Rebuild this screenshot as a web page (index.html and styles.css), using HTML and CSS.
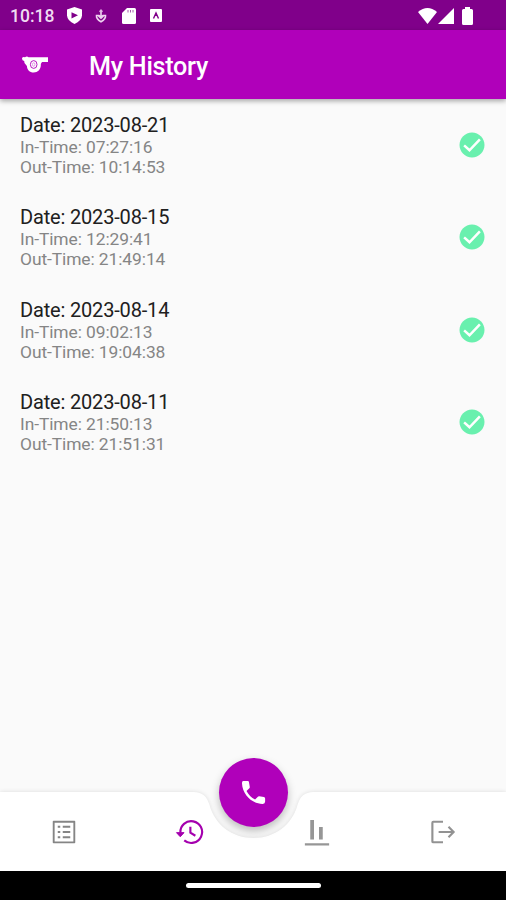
FILE: index.html
```html
<!DOCTYPE html>
<html lang="en">
<head>
<meta charset="utf-8">
<title>My History</title>
<link rel="stylesheet" href="styles.css">
</head>
<body>
<svg class="defs" aria-hidden="true">
  <symbol id="check" viewBox="0 0 24 24"><path d="M12 2C6.480 2 2 6.480 2 12s4.480 10 10 10 10-4.480 10-10S17.520 2 12 2z"/><path d="M5.700 12.300L10 16.200L18.300 7.500" fill="none" stroke="#fff" stroke-width="2"/></symbol>
</svg>
<div class="screen">
  <div class="status">
    <span class="clock">10:18</span>
    <svg class="s-shield" viewBox="0 0 15 17"><path fill="#fff" d="M7.500 0L15 2.500V8.500Q14.500 14 7.500 17Q.5 14 0 8.500V2.500z"/><path fill="#80008a" d="M4.500 5.200L11 8.300L4.500 11.400z"/></svg>
    <svg class="s-person" viewBox="0 0 12 14"><path d="M6 0L8 2.200L6 4.500L4 2.200z" fill="#e0b8e4"/><path d="M6 3.500V7M1.500 6.500H4L6 8L8 6.500H10.500C10.800 9 9 11 6 12.800C3 11 1.200 9 1.500 6.500z" fill="none" stroke="#edd3ef" stroke-width="1.600"/><path d="M3.500 7L6 9.300L8.500 7" fill="none" stroke="#edd3ef" stroke-width="1.500"/></svg>
    <svg class="s-card" viewBox="0 0 14 16"><path fill="#fff" d="M5 0H12.500Q14 0 14 1.500V14.500Q14 16 12.500 16H1.500Q0 16 0 14.500V5z"/><path d="M6 2v2.500M8.500 2v2.500M11 2v2.500" stroke="#a75aad"/></svg>
    <svg class="s-app" viewBox="0 0 12 13"><rect width="12" height="13" rx="1" fill="#fff"/><path d="M3.500 9.500L6 4L8.500 9.500M6 4V7" fill="none" stroke="#80008a" stroke-width="1.400"/></svg>
    <span class="spacer"></span>
    <svg class="s-wifi" viewBox="0 0 19 16"><path fill="#fff" d="M0 4Q9.500-4 19 4L9.500 16z"/></svg>
    <svg class="s-signal" viewBox="0 0 16 16"><path fill="#fff" d="M16 0V16H0z"/></svg>
    <svg class="s-battery" viewBox="0 0 11 18"><path fill="#fff" d="M3 0H8V2H9.500Q11 2 11 3.500V16.500Q11 18 9.500 18H1.500Q0 18 0 16.500V3.500Q0 2 1.500 2H3z"/></svg>
  </div>
  <header class="appbar">
    <svg class="whistle" viewBox="0 0 26 17"><path fill="#fff" d="M0 2.500Q0 1 1.500 1L3 1.300Q5 -.3 6.500 1.300H26V6H20L18.800 8C19.300 13 16 16.500 11.700 16.500C7.500 16.500 5.200 14 4.900 10L2.500 7L2.200 5Q0 4.500 0 2.500z"/><ellipse cx="11.700" cy="8.500" rx="3.300" ry="3.900" fill="none" stroke="#b000ba" stroke-width=".9"/><ellipse cx="11.700" cy="8.500" rx="1.200" ry="1.800" fill="none" stroke="#d477da" stroke-width=".7"/></svg>
    <h1>My History</h1>
  </header>
  <main class="list">
    <div class="row"><div><p class="date">Date: 2023-08-21</p><p class="time">In-Time: 07:27:16</p><p class="time">Out-Time: 10:14:53</p></div><svg class="check"><use href="#check"/></svg></div>
    <div class="row"><div><p class="date">Date: 2023-08-15</p><p class="time">In-Time: 12:29:41</p><p class="time">Out-Time: 21:49:14</p></div><svg class="check"><use href="#check"/></svg></div>
    <div class="row"><div><p class="date">Date: 2023-08-14</p><p class="time">In-Time: 09:02:13</p><p class="time">Out-Time: 19:04:38</p></div><svg class="check"><use href="#check"/></svg></div>
    <div class="row"><div><p class="date">Date: 2023-08-11</p><p class="time">In-Time: 21:50:13</p><p class="time">Out-Time: 21:51:31</p></div><svg class="check"><use href="#check"/></svg></div>
  </main>
  <footer class="nav">
    <svg class="notch" viewBox="0 0 506 79"><path fill="#fff" d="M0 0H193C203 0 207 5 209.500 13C215 33 232 46 253.500 46C275 46 292 33 297.500 13C300 5 304 0 314 0H506V79H0z"/></svg>
    <div class="tabs">
      <svg viewBox="0 0 24 24" fill="#858585"><path fill-rule="evenodd" d="M20.400 3H3.600C3.200 3 3 3.300 3 3.600v16.800c0 .4.300.6.600.6h16.800c.3 0 .6-.3.6-.6V3.600c0-.4-.3-.6-.6-.6zM19.500 19.500h-15v-15h15z"/><path d="M11 7h6v1.600h-6zM11 11.200h6v1.600h-6zM11 15.400h6v1.600h-6zM7 7h2v1.600H7zM7 11.200h2v1.600H7zM7 15.400h2v1.600H7z"/></svg>
      <svg viewBox="0 0 24 24" fill="none" stroke="#a400ae" stroke-width="1.700"><path d="M4.300 12.600A8.700 8.700 0 1 1 7.400 18.700"/><path d="M12.300 7.800V12.600L16.300 15"/><path d="M1.200 12.500H7.200L4.200 15.800z" fill="#a400ae" stroke-width=".8"/></svg>
      <svg viewBox="0 0 24 24" fill="#969696"><path d="M2.300 21h19.400v1.700H2.300zM6.600 2.300h3v15.700h-3zM13.600 8h3v10h-3z"/></svg>
      <svg viewBox="0 0 24 24" fill="none" stroke="#929292" stroke-width="1.700"><path d="M12 3.800H4.200Q3.500 3.800 3.500 4.500V19.500Q3.500 20.200 4.200 20.200H12M8.500 12H20.500M16.400 7.800L20.500 12l-4.100 4.200"/></svg>
    </div>
    <div class="fab"><svg viewBox="0 0 24 24"><path fill="#fff" d="M4 3H7.500Q8.500 3 8.500 4L9.100 7.600Q9.200 8.300 8.800 8.700L6.600 10.800C8 13.600 10.400 16 13.200 17.400L15.400 15.200Q15.800 14.800 16.400 14.900L20 15.500Q21 15.600 21 16.600V19Q21 21 19 20.900C10.500 20.500 3.500 13.500 3.100 5Q3 3 4 3z"/></svg></div>
  </footer>
  <div class="system"><span></span></div>
</div>
</body>
</html>
```

FILE: styles.css
```css
* { box-sizing: border-box; }
body { margin: 0; font-family: Roboto, "Liberation Sans", sans-serif; }
h1, p { margin: 0; }
svg { display: block; flex: none; }
.defs { position: absolute; width: 0; height: 0; }
.screen { width: 506px; height: 900px; display: flex; flex-direction: column; background: #fafafa; overflow: hidden; }
.status { height: 30px; flex: none; display: flex; align-items: center; padding: 1px 33px 0 10px; background: #80008a; }
.clock { width: 57px; font-size: 17.5px; font-weight: 500; line-height: 28px; color: #f0dcf2; }
.s-shield { width: 15px; height: 17px; }
.s-person { width: 12px; height: 14px; margin-left: 13px; }
.s-card { width: 14px; height: 16px; margin-left: 15px; }
.s-app { width: 12px; height: 13px; margin-left: 14px; }
.spacer { flex: 1; }
.s-wifi { width: 19px; height: 16px; }
.s-signal { width: 16px; height: 16px; margin-left: 1px; }
.s-battery { width: 11px; height: 18px; margin-left: 8px; }
.appbar { height: 69px; flex: none; display: flex; align-items: center; padding: 1px 22px 0; background: #b000ba; box-shadow: 0 2px 5px rgba(0,0,0,.35); }
.whistle { width: 26px; height: 17px; margin-top: -2px; }
.appbar h1 { margin: 3px 0 0 41px; font-size: 25.2px; letter-spacing: -.27px; line-height: 34px; font-weight: 500; color: #fff; }
.list { flex: 1; }
.row { height: 92.3px; display: flex; justify-content: space-between; align-items: center; padding: 0 19px 0 20px; }
.date { font-size: 20px; letter-spacing: -.17px; line-height: 24px; color: #202020; }
.time { font-size: 17.4px; letter-spacing: -.08px; line-height: 20px; color: #858585; }
.check { width: 30px; height: 30px; fill: #69f0ae; }
.nav { position: relative; height: 79px; flex: none; }
.notch { position: absolute; inset: 0; width: 506px; height: 79px; filter: drop-shadow(0 0 2px rgba(0,0,0,.12)); }
.tabs { position: relative; height: 79px; padding-left: 1px; display: grid; grid-template-columns: repeat(4, 1fr); align-items: center; justify-items: center; }
.tabs svg { width: 30px; height: 30px; }
.fab { position: absolute; left: 219px; top: -34px; width: 69px; height: 69px; border-radius: 50%; background: #b000ba; display: flex; align-items: center; justify-content: center; box-shadow: 0 4px 8px rgba(0,0,0,.25); }
.fab svg { width: 31px; height: 31px; }
.system { height: 29px; flex: none; background: #000; display: flex; justify-content: center; padding-top: 12px; }
.system span { width: 135px; height: 5px; border-radius: 3px; background: #fff; }
```
